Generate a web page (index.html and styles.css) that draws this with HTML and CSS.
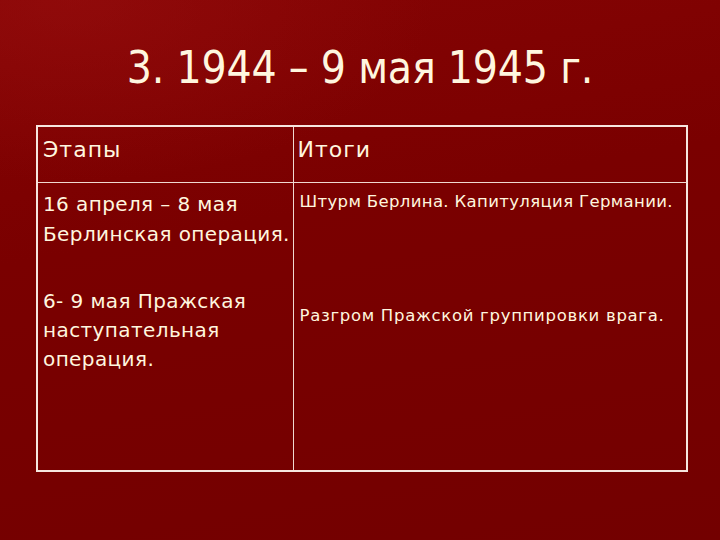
FILE: index.html
```html
<!DOCTYPE html>
<html lang="ru">
<head>
<meta charset="utf-8">
<link rel="stylesheet" href="styles.css">
</head>
<body>
<div class="slide">
  <h1 class="title">3. 1944 – 9 мая 1945 г.</h1>
  <table class="grid">
    <colgroup><col class="c1"><col class="c2"></colgroup>
    <tr class="head">
      <td>Этапы</td>
      <td class="h2">Итоги</td>
    </tr>
    <tr class="body">
      <td class="left">
        <p class="p1">16 апреля – 8 мая<br>Берлинская операция.</p>
        <p class="p2">6- 9 мая Пражская<br>наступательная<br>операция.</p>
      </td>
      <td class="right">
        <p class="r1">Штурм Берлина. Капитуляция Германии.</p>
        <p class="r2">Разгром Пражской группировки врага.</p>
      </td>
    </tr>
  </table>
</div>
</body>
</html>
```
FILE: styles.css
```css
html, body {
  margin: 0;
  padding: 0;
}
body {
  width: 720px;
  height: 540px;
  overflow: hidden;
}
.slide {
  width: 720px;
  height: 540px;
  box-sizing: border-box;
  padding-top: 38px;
  background:
    radial-gradient(ellipse 520px 260px at 10% 0%, rgba(160, 20, 20, 0.4), rgba(160, 20, 20, 0) 70%),
    linear-gradient(170deg, #860404 0%, #7a0000 40%, #730000 100%);
  color: #fff6df;
  font-family: "DejaVu Sans", sans-serif;
}
.title {
  margin: 0;
  font-family: "DejaVu Sans Condensed", "DejaVu Sans", sans-serif;
  font-stretch: condensed;
  font-weight: normal;
  font-size: 44px;
  line-height: 60px;
  text-align: center;
  letter-spacing: -0.2px;
}
.grid {
  margin: 27px 0 0 36px;
  width: 650px;
  border-collapse: collapse;
  table-layout: fixed;
  border: 2px solid #f6e6df;
}
.c1 { width: 256px; }
.c2 { width: 394px; }
.grid td {
  border: 1px solid #f0d8d0;
  vertical-align: top;
  padding: 0 0 0 5px;
}
.head td {
  height: 56px;
  font-size: 22px;
  line-height: 26px;
  letter-spacing: 1px;
  padding-top: 10px;
  box-sizing: border-box;
}
.grid .h2 {
  padding-left: 4px;
}
.body td {
  height: 287px;
}
p {
  margin: 0;
}
.left {
  font-size: 20px;
  line-height: 30px;
  letter-spacing: 0.4px;
}
.p1 {
  margin-top: 6px;
}
.p2 {
  margin-top: 38px;
  line-height: 29px;
}
.right {
  font-size: 16.5px;
  line-height: 22px;
  letter-spacing: 0.35px;
}
.grid .right {
  padding-left: 6px;
}
.r1 {
  margin-top: 8px;
}
.r2 {
  margin-top: 92px;
  letter-spacing: 0.7px;
}
```
